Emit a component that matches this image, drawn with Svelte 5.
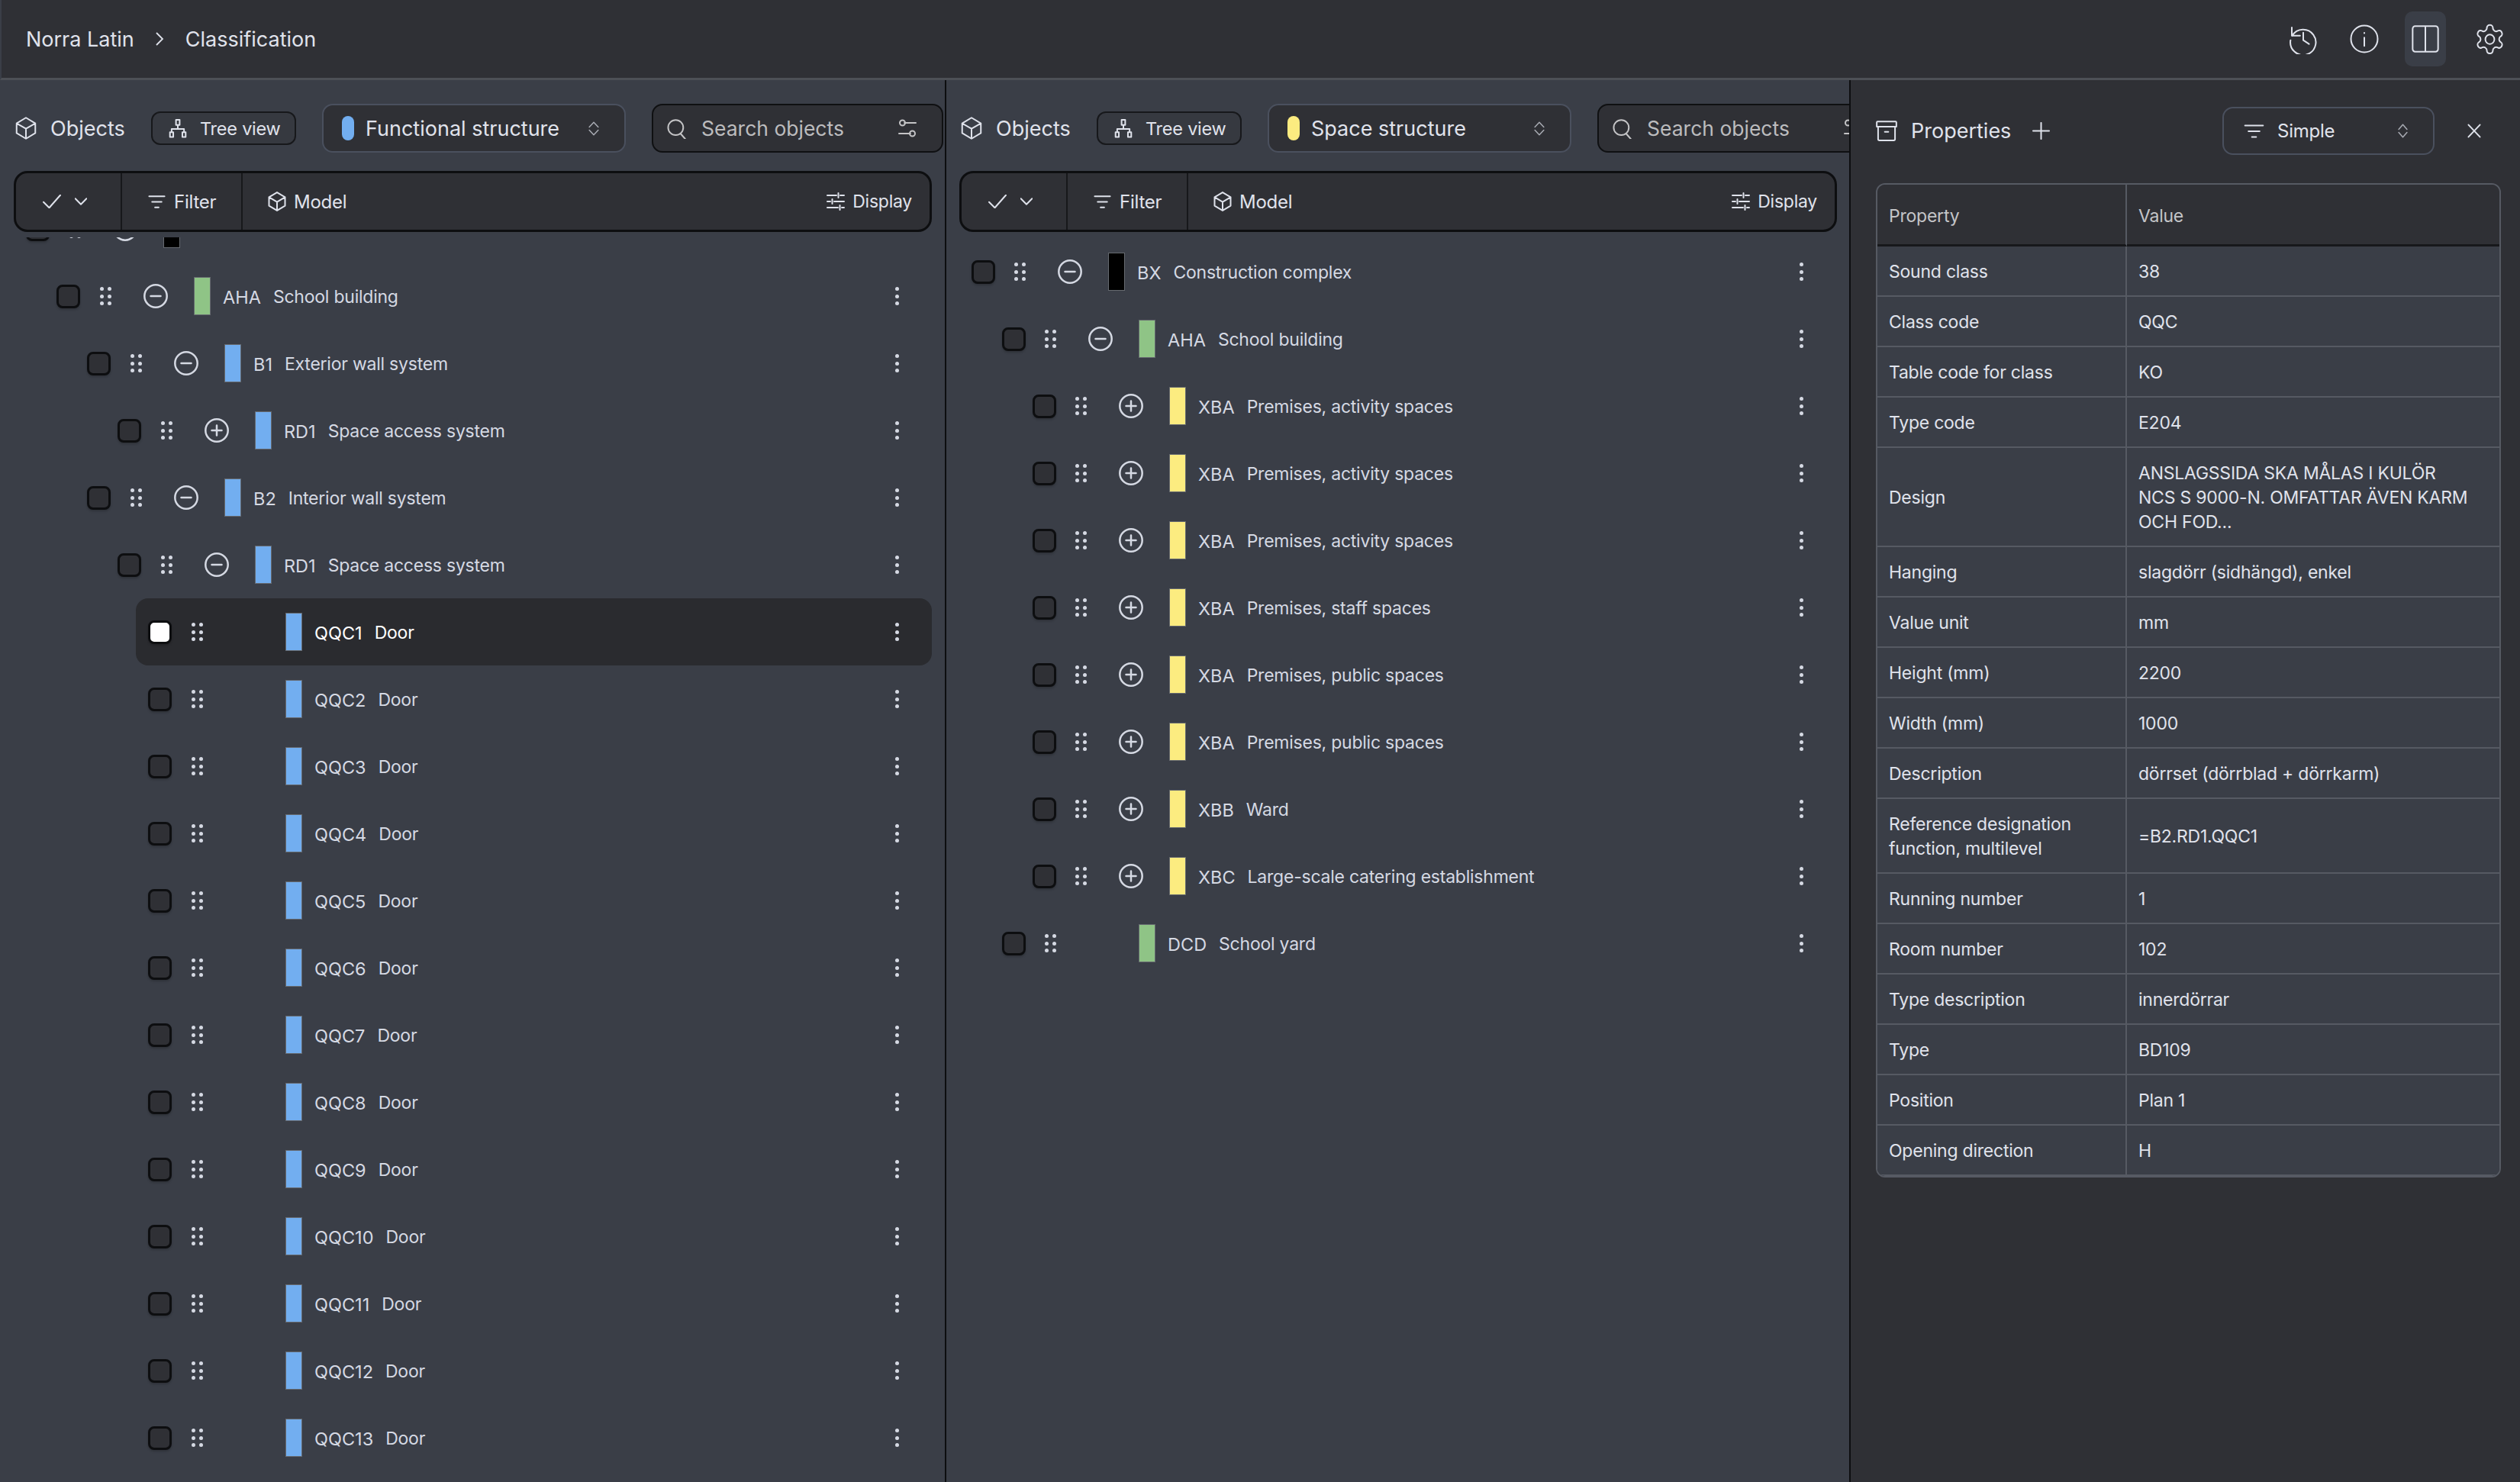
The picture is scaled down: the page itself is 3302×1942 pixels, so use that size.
<script>
  const ICONS = {
    box: 'M12 1 22.500 6.900v10.200L12 23 1.500 17.100V6.900ZM1.500 6.900 12 12.500l10.500-5.600M12 12.500V23',
    tree: 'M9.800 1h4.400v6.400H9.800ZM12 7.400v5M4.500 16.600v-4.200h15v4.200M2.500 16.600h4v6h-4ZM17.500 16.600h4v6h-4Z',
    updown: 'M2 9.500 12 1.500l10 8M2 14.500 12 22.500l10-8',
    search: 'M11 2a8.600 8.600 0 1 0 0 17.600A8.600 8.600 0 0 0 11 2ZM16.600 17.800 22 24',
    tune: 'M8 5h15M1 19h15M5.500 1.500a3.500 3.500 0 1 0 0 7 3.500 3.500 0 0 0 0-7ZM18.500 15.500a3.500 3.500 0 1 0 0 7 3.500 3.500 0 0 0 0-7Z',
    check: 'M1 13l7.500 10L23 1',
    chevron: 'M1 3l11 18L23 3',
    filter: 'M1.500 4.500h21M5.500 12h13M9.500 19.500h5',
    sliders: 'M1 4h12M18 4h5M15.500 1v6M1 12h4M10 12h13M7.500 9v6M1 20h14M20 20h3M17.500 17v6',
    history: 'M3 3v6.500h6.500M3.300 9.500A10 10 0 1 1 2 13M12 7v6l4.500 3',
    info: 'M12 1.500a10.500 10.500 0 1 0 0 21 10.500 10.500 0 0 0 0-21ZM12 11v6.500M12 7.200v.3',
    panel: 'M4 2h16a2 2 0 0 1 2 2v16a2 2 0 0 1-2 2H4a2 2 0 0 1-2-2V4a2 2 0 0 1 2-2ZM12 2v20',
    gear: 'M12.200 2h-.4a2 2 0 0 0-2 2v.2a2 2 0 0 1-1 1.700l-.4.300a2 2 0 0 1-2 0l-.2-.1a2 2 0 0 0-2.700.7l-.2.4a2 2 0 0 0 .7 2.700l.2.1a2 2 0 0 1 1 1.700v.5a2 2 0 0 1-1 1.700l-.2.1a2 2 0 0 0-.7 2.700l.2.4a2 2 0 0 0 2.700.7l.2-.1a2 2 0 0 1 2 0l.4.300a2 2 0 0 1 1 1.700v.2a2 2 0 0 0 2 2h.4a2 2 0 0 0 2-2v-.2a2 2 0 0 1 1-1.700l.4-.3a2 2 0 0 1 2 0l.2.1a2 2 0 0 0 2.700-.7l.2-.4a2 2 0 0 0-.7-2.700l-.2-.1a2 2 0 0 1-1-1.700v-.5a2 2 0 0 1 1-1.700l.2-.1a2 2 0 0 0 .7-2.700l-.2-.4a2 2 0 0 0-2.700-.7l-.2.1a2 2 0 0 1-2 0l-.4-.3a2 2 0 0 1-1-1.700V4a2 2 0 0 0-2-2ZM12 8.700a3.300 3.300 0 1 0 0 6.600 3.300 3.300 0 0 0 0-6.600Z',
    archive: 'M2 1h20a1 1 0 0 1 1 1v5H1V2a1 1 0 0 1 1-1ZM2.500 7v14.500A1.500 1.500 0 0 0 4 23h16a1.500 1.500 0 0 0 1.500-1.500V7M10 13h4',
    plus: 'M12 1v22M1 12h22',
    close: 'M3 2l18 20M21 2 3 22',
  };

  const BLUE = '#72aef0';
  const GREEN = '#8fc486';
  const YELLOW = '#fcec80';
  const BLACK = '#000';

  const doors = Array.from({ length: 13 }, (_, i) => ({
    d: 4, exp: '', color: BLUE, code: 'QQC' + (i + 1), name: 'Door', selected: i === 0,
  }));

  // first row is scrolled almost out of view, only its lower controls show under the toolbar
  const functionalRows = [
    { d: 0, exp: 'minus', color: BLACK, code: '', name: '', scrolled: true },
    { d: 1, exp: 'minus', color: GREEN, code: 'AHA', name: 'School building' },
    { d: 2, exp: 'minus', color: BLUE, code: 'B1', name: 'Exterior wall system' },
    { d: 3, exp: 'plus', color: BLUE, code: 'RD1', name: 'Space access system' },
    { d: 2, exp: 'minus', color: BLUE, code: 'B2', name: 'Interior wall system' },
    { d: 3, exp: 'minus', color: BLUE, code: 'RD1', name: 'Space access system' },
    ...doors,
  ];

  const spaceRows = [
    { d: 0, exp: 'minus', color: BLACK, code: 'BX', name: 'Construction complex' },
    { d: 1, exp: 'minus', color: GREEN, code: 'AHA', name: 'School building' },
    ...[
      ['XBA', 'Premises, activity spaces'],
      ['XBA', 'Premises, activity spaces'],
      ['XBA', 'Premises, activity spaces'],
      ['XBA', 'Premises, staff spaces'],
      ['XBA', 'Premises, public spaces'],
      ['XBA', 'Premises, public spaces'],
      ['XBB', 'Ward'],
      ['XBC', 'Large-scale catering establishment'],
    ].map(([code, name]) => ({ d: 2, exp: 'plus', color: YELLOW, code, name })),
    { d: 1, exp: '', color: GREEN, code: 'DCD', name: 'School yard' },
  ];

  const props = [
    ['Sound class', '38'],
    ['Class code', 'QQC'],
    ['Table code for class', 'KO'],
    ['Type code', 'E204'],
    ['Design', 'ANSLAGSSIDA SKA MÅLAS I KULÖR\nNCS S 9000-N. OMFATTAR ÄVEN KARM\nOCH FOD...'],
    ['Hanging', 'slagdörr (sidhängd), enkel'],
    ['Value unit', 'mm'],
    ['Height (mm)', '2200'],
    ['Width (mm)', '1000'],
    ['Description', 'dörrset (dörrblad + dörrkarm)'],
    ['Reference designation\nfunction, multilevel', '=B2.RD1.QQC1'],
    ['Running number', '1'],
    ['Room number', '102'],
    ['Type description', 'innerdörrar'],
    ['Type', 'BD109'],
    ['Position', 'Plan 1'],
    ['Opening direction', 'H'],
  ];
</script>

{#snippet icon(name, w, h = w, sw = 2)}
  <svg class="icon" width={w} height={h} viewBox="0 0 24 24" preserveAspectRatio="none" stroke-width={sw}>
    <path d={ICONS[name]} vector-effect="non-scaling-stroke" />
  </svg>
{/snippet}

{#snippet updown(w)}
  <span class="updown">{@render icon('updown', w, 19, 1.5)}</span>
{/snippet}

{#snippet panel(cls, pill, structure, rows)}
  <section class="panel {cls}">
    <header class="objects-head">
      <span class="obj-icon">{@render icon('box', 28, 30)}</span>
      <span class="obj-title">Objects</span>
      <button class="tree-btn">{@render icon('tree', 26, 25)}<span>Tree view</span></button>
      <div class="select">
        <span class="pill" style="background:{pill}"></span>
        <span class="select-label">{structure}</span>
        {@render updown(14)}
      </div>
      <div class="search">
        {@render icon('search', 27, 27)}
        <span class="search-label">Search objects</span>
        {@render icon('tune', 24, 24)}
      </div>
    </header>

    <div class="toolbar">
      <div class="tool tool-check">
        {@render icon('check', 24, 18)}
        {@render icon('chevron', 16, 10)}
      </div>
      <div class="tool tool-filter">{@render icon('filter', 23, 23)}<span>Filter</span></div>
      <div class="tool tool-model">{@render icon('box', 24, 26)}<span>Model</span></div>
      <div class="tool tool-display">{@render icon('sliders', 24, 24)}<span>Display</span></div>
    </div>

    <div class="tree">
      <ul class="rows">
        {#each rows as row}
          <li class="row" class:selected={row.selected} style="margin-left:{row.d * 40}px">
            <span class="check"></span>
            <span class="grip">{#each Array(6) as _}<i></i>{/each}</span>
            <span class="expander">
              {#if row.exp}
                <svg width="32" height="32" viewBox="0 0 32 32">
                  <circle cx="16" cy="16" r="14.700" />
                  <path d={row.exp === 'plus' ? 'M16 9.500v13M9.500 16h13' : 'M9.500 16h13'} />
                </svg>
              {/if}
            </span>
            <span class="swatch" style="background:{row.color}"></span>
            {#if !row.scrolled}
              <span class="code">{row.code}</span>
              <span class="name">{row.name}</span>
              <span class="kebab"><i></i><i></i><i></i></span>
            {/if}
          </li>
        {/each}
      </ul>
    </div>
  </section>
{/snippet}

<div class="app">
  <nav class="topbar">
    <span class="crumb">Norra Latin</span>
    <svg class="crumb-sep" width="12" height="20" viewBox="0 0 12 20"><path d="M2 2l8 8-8 8" /></svg>
    <span class="crumb">Classification</span>
    <div class="top-actions">
      <span class="top-btn">{@render icon('history', 40, 40)}</span>
      <span class="top-btn">{@render icon('info', 40, 40)}</span>
      <span class="top-btn active">{@render icon('panel', 40, 40)}</span>
      <span class="top-btn gear">{@render icon('gear', 43, 45)}</span>
    </div>
  </nav>

  <main class="main">
    {@render panel('functional', BLUE, 'Functional structure', functionalRows)}
    {@render panel('space', YELLOW, 'Space structure', spaceRows)}

    <aside class="props">
      <div class="props-head">
        {@render icon('archive', 28, 27)}
        <span class="props-title">Properties</span>
        {@render icon('plus', 23, 23)}
        <div class="props-select">
          {@render icon('filter', 27, 24)}
          <span class="props-mode">Simple</span>
          {@render updown(13)}
        </div>
        <span class="props-close">{@render icon('close', 20, 19)}</span>
      </div>

      <div class="table-wrap">
        <table>
          <thead>
            <tr><th>Property</th><th>Value</th></tr>
          </thead>
          <tbody>
            {#each props as [key, value]}
              <tr><td>{key}</td><td>{value}</td></tr>
            {/each}
          </tbody>
        </table>
      </div>
    </aside>
  </main>
</div>

<style>
  :global(body) {
    margin: 0;
    background: #3a3e47;
  }

  .app {
    width: 3302px;
    height: 1942px;
    overflow: hidden;
    display: flex;
    flex-direction: column;
    background: #3a3e47;
    color: #e0e3ec;
    font-family: Inter, "Liberation Sans", sans-serif;
    font-size: 24px;
  }

  .icon {
    display: block;
    flex: none;
    fill: none;
    stroke: #dfe2eb;
    stroke-linecap: round;
    stroke-linejoin: round;
  }

  .updown .icon {
    stroke: #a8abb3;
  }

  .topbar {
    flex: none;
    box-sizing: border-box;
    height: 105px;
    display: flex;
    align-items: center;
    padding-left: 32px;
    background: #2f3035;
    border-bottom: 3px solid #4d5056;
    border-left: 2px solid #3a3e47;
  }

  .crumb {
    font-size: 27px;
    color: #e0e3ec;
  }

  .crumb-sep {
    margin: 0 28px 0 27px;
    fill: none;
    stroke: #dfe2eb;
    stroke-width: 1.800;
  }

  .top-actions {
    margin-left: auto;
    margin-right: 13px;
    display: flex;
    align-items: center;
    gap: 26px;
  }

  .top-btn {
    width: 54px;
    height: 72px;
    display: flex;
    align-items: center;
    justify-content: center;
    border-radius: 10px;
  }

  .top-btn.active {
    background: #3a3e47;
  }

  .top-btn.gear {
    margin-left: 4px;
  }

  .main {
    flex: 1;
    min-height: 0;
    display: flex;
  }

  .panel {
    flex: none;
    box-sizing: border-box;
    padding-top: 31px;
    overflow: hidden;
    border-right: 2px solid #0d0e10;
  }

  .functional {
    width: 1240px;
    padding-left: 18px;
    padding-right: 17px;
  }

  .space {
    width: 1185px;
    padding-left: 17px;
    padding-right: 16px;
  }

  .objects-head {
    display: flex;
    align-items: center;
    height: 64px;
    padding-left: 2px;
    white-space: nowrap;
  }

  .obj-icon {
    flex: none;
  }

  .obj-title {
    flex: none;
    width: 98px;
    margin-left: 18px;
    font-size: 27px;
  }

  .tree-btn {
    flex: none;
    box-sizing: border-box;
    width: 190px;
    height: 44px;
    margin-left: 34px;
    padding: 0 0 0 20px;
    display: flex;
    align-items: center;
    gap: 16px;
    font: inherit;
    font-size: 23.500px;
    letter-spacing: -0.01em;
    color: #e0e3ec;
    background: #363940;
    border: 2px solid #17181b;
    border-radius: 12px;
  }

  .select {
    flex: none;
    box-sizing: border-box;
    width: 398px;
    height: 64px;
    margin-left: 34px;
    padding: 0 33px 0 24px;
    display: flex;
    align-items: center;
    background: #2f3035;
    border: 2px solid #4a505e;
    border-radius: 14px;
  }

  .pill {
    flex: none;
    width: 16px;
    height: 32px;
    border-radius: 8px;
  }

  .select-label {
    flex: 1;
    margin-left: 15px;
    font-size: 27px;
  }

  .search {
    flex: none;
    box-sizing: border-box;
    width: 382px;
    height: 64px;
    margin-left: 34px;
    padding: 0 33px 0 17px;
    display: flex;
    align-items: center;
    background: #2f3035;
    border: 2px solid #0f1012;
    border-radius: 14px;
  }

  .search .icon {
    stroke: #c4c4c6;
  }

  .search-label {
    flex: 1;
    margin-left: 19px;
    font-size: 26.500px;
    color: #bcbcbe;
  }

  .toolbar {
    box-sizing: border-box;
    height: 80px;
    margin-top: 24px;
    display: flex;
    align-items: stretch;
    background: #2f3035;
    border: 3px solid #0d0e10;
    border-radius: 18px;
    letter-spacing: -0.01em;
  }

  .tool {
    box-sizing: border-box;
    display: flex;
    align-items: center;
  }

  .tool-check {
    flex: none;
    width: 139px;
    padding-left: 35px;
    gap: 18px;
    border-right: 2px solid #17181b;
  }

  .tool-filter {
    flex: none;
    width: 158px;
    padding-left: 34px;
    gap: 11px;
    border-right: 2px solid #17181b;
  }

  .tool-model {
    flex: 1;
    padding-left: 33px;
    gap: 10px;
  }

  .tool-display {
    flex: none;
    padding-right: 23px;
    gap: 10px;
    font-size: 23px;
  }

  .tree {
    height: 1600px;
    margin-top: 7px;
    overflow: hidden;
  }

  .rows {
    list-style: none;
    margin: 0;
    padding: 0;
  }

  .functional .rows {
    margin-top: -55px;
  }

  .space .rows {
    margin-top: 1px;
  }

  .row {
    height: 88px;
    padding-left: 16px;
    display: flex;
    align-items: center;
    border-radius: 16px;
    font-size: 23px;
    color: #d5d9e3;
  }

  .row.selected {
    background: #2a2b2f;
    color: #fff;
  }

  .check {
    flex: none;
    box-sizing: border-box;
    width: 31px;
    height: 31px;
    background: #2f3035;
    border: 3px solid #0d0e10;
    border-radius: 8px;
    box-shadow: 0 2px 3px rgba(0, 0, 0, 0.2);
  }

  .selected .check {
    background: #fff;
  }

  .grip {
    flex: none;
    width: 14px;
    margin-left: 26px;
    display: grid;
    grid-template-columns: 5px 5px;
    gap: 4.500px;
  }

  .space .grip {
    margin-left: 25px;
  }

  .grip i {
    width: 5px;
    height: 5px;
    border-radius: 50%;
    background: #d5d9e3;
  }

  .expander {
    flex: none;
    width: 32px;
    height: 32px;
    margin-left: 43px;
  }

  .expander svg {
    display: block;
    fill: none;
    stroke: #d5d9e3;
    stroke-width: 2.500;
    stroke-linecap: round;
  }

  .swatch {
    flex: none;
    box-sizing: border-box;
    width: 22px;
    height: 50px;
    margin-left: 34px;
    border: 1px solid #666a70;
  }

  .code {
    margin-left: 16px;
    padding-top: 2px;
    font-size: 23.500px;
  }

  .name {
    margin-left: 16px;
    padding-top: 2px;
    letter-spacing: -0.01em;
  }

  .kebab {
    margin-left: auto;
    margin-right: 43px;
    display: flex;
    flex-direction: column;
    gap: 4.500px;
  }

  .space .kebab {
    margin-right: 44px;
  }

  .kebab i {
    width: 5px;
    height: 5px;
    border-radius: 50%;
    background: #d5d9e3;
  }

  .props {
    flex: 1;
    min-width: 0;
    box-sizing: border-box;
    padding: 35px 25px 0 33px;
    background: #2f3035;
  }

  .props-head {
    display: flex;
    align-items: center;
    height: 63px;
  }

  .props-title {
    margin-left: 18px;
    margin-right: 29px;
    width: 130px;
    font-size: 27px;
  }

  .props-select {
    box-sizing: border-box;
    width: 278px;
    height: 63px;
    margin-left: auto;
    padding: 0 33px 0 26px;
    display: flex;
    align-items: center;
    border: 2px solid #4a505e;
    border-radius: 14px;
  }

  .props-mode {
    flex: 1;
    margin-left: 17px;
    letter-spacing: -0.01em;
  }

  .props-close {
    margin-left: 42px;
    margin-right: 25px;
  }

  .table-wrap {
    margin-top: 37px;
    border: 2px solid #565a63;
    border-radius: 12px;
    overflow: hidden;
  }

  table {
    width: 100%;
    border-collapse: separate;
    border-spacing: 0;
    table-layout: fixed;
    font-size: 23px;
    line-height: 32px;
    letter-spacing: -0.01em;
  }

  th {
    box-sizing: border-box;
    height: 81px;
    padding: 4px 15px 0;
    text-align: left;
    font-weight: 400;
    color: #c4c5c8;
    background: #2f3035;
    border-bottom: 3px solid #17181b;
  }

  th:first-child,
  td:first-child {
    width: 327px;
    border-right: 2px solid #565a63;
  }

  td {
    padding: 17px 15px 15px;
    white-space: pre-line;
    color: #e0e3ec;
    background: #3a3e47;
    border-bottom: 2px solid #565a63;
  }
</style>
